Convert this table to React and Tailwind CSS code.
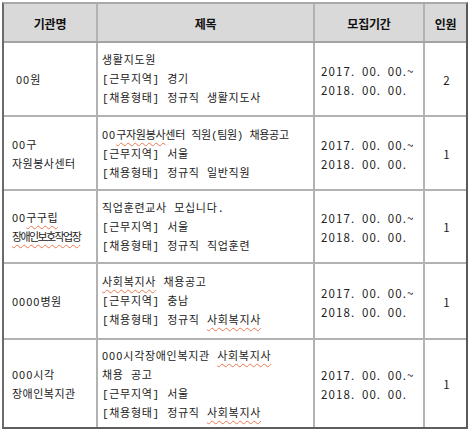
const font = { fontFamily: '"Liberation Mono", "Noto Sans CJK KR", monospace' };
const cjk = { fontFamily: '"Noto Sans CJK KR", sans-serif' };

const Sq = ({ children }) => (
  <span className="underline decoration-wavy decoration-[#ea7a52] decoration-1 underline-offset-[3px]">
    {children}
  </span>
);

// digits look thin in the reference, so they use the CJK face
const N = ({ children }) => (
  <span className="tracking-[1px]" style={cjk}>
    {children}
  </span>
);

const rows = [
  {
    h: 'h-[74px]',
    org: [
      <span className="pl-1">
        <N>00</N>원
      </span>,
    ],
    title: ['생활지도원', '[근무지역] 경기', '[채용형태] 정규직 생활지도사'],
    count: '2',
  },
  {
    h: 'h-[74px]',
    org: [
      <span>
        <N>00</N>구
      </span>,
      '자원봉사센터',
    ],
    title: [
      <span className="tracking-[-0.3px]">
        <N>00</N>
        <Sq>구자원봉사</Sq>센터 직원(팀원) 채용공고
      </span>,
      '[근무지역] 서울',
      '[채용형태] 정규직 일반직원',
    ],
    count: '1',
  },
  {
    h: 'h-[73px]',
    org: [
      <span>
        <N>00</N>
        <Sq>구구립</Sq>
      </span>,
      <span className="tracking-[-1.6px]">
        <Sq>장애인보호작업장</Sq>
      </span>,
    ],
    title: ['직업훈련교사 모십니다.', '[근무지역] 서울', '[채용형태] 정규직 직업훈련'],
    count: '1',
  },
  {
    h: 'h-[76px]',
    org: [
      <span>
        <N>0000</N>병원
      </span>,
    ],
    title: [
      <span>
        <Sq>사회복지사</Sq> 채용공고
      </span>,
      '[근무지역] 충남',
      <span>
        [채용형태] 정규직 <Sq>사회복지사</Sq>
      </span>,
    ],
    count: '1',
  },
  {
    h: 'h-[87px]',
    org: [
      <span>
        <N>000</N>시각
      </span>,
      '장애인복지관',
    ],
    title: [
      <span>
        <N>000</N>시각장애인복지관 <Sq>사회복지사</Sq>
      </span>,
      '채용 공고',
      '[근무지역] 서울',
      <span>
        [채용형태] 정규직 <Sq>사회복지사</Sq>
      </span>,
    ],
    count: '1',
  },
];

const cols = 'grid grid-cols-[94px_217px_110px_41px]';
const line = 'border-r-2 border-[#b2b2b2]';

export default function App() {
  return (
    <div className="w-[472px] h-[436px] bg-white pt-[2px] pl-[2px]" style={font}>
      <div className="w-[466px] border-2 border-t-[#a9a9a9] border-l-[#6a6a6a] border-r-[#595959] border-b-[#5e5e5e] text-[11px] text-[#222]">
        {/* header */}
        <div
          className={`${cols} h-[39px] bg-[#d9d9d9] border-b-2 border-[#a3a3a3] font-bold text-[12px] text-[#111] tracking-[-0.2px]`}
          style={cjk}
        >
          <div className={`${line} border-[#a3a3a3] flex items-center justify-center pt-[3px]`}>기관명</div>
          <div className={`${line} border-[#a3a3a3] flex items-center justify-center pt-[3px]`}>제목</div>
          <div className={`${line} border-[#a3a3a3] flex items-center justify-center pt-[3px]`}>모집기간</div>
          <div className="flex items-center justify-center pt-[3px]">인원</div>
        </div>

        {rows.map((r, i) => (
          <div
            key={i}
            className={`${cols} ${r.h} ${i < rows.length - 1 ? 'border-b-2 border-[#b2b2b2]' : ''}`}
          >
            <div className={`${line} flex flex-col justify-center pl-2 pt-[3px] leading-[19px] tracking-[0.5px] whitespace-nowrap`}>
              {r.org.map((t, j) => (
                <div key={j}>{t}</div>
              ))}
            </div>
            <div className={`${line} flex flex-col justify-center pl-[4px] pt-[3px] leading-[19px] tracking-[0.7px] whitespace-nowrap`}>
              {r.title.map((t, j) => (
                <div key={j}>{t}</div>
              ))}
            </div>
            <div
              className={`${line} flex flex-col justify-center pl-[6px] pt-[3px] leading-[19px] tracking-[1.1px] [word-spacing:3px] text-[11.5px] whitespace-nowrap`}
              style={cjk}
            >
              <div>2017. 00. 00.~</div>
              <div>2018. 00. 00.</div>
            </div>
            <div className="flex items-center justify-center pl-[2px] pt-[3px] text-[11.5px]" style={cjk}>
              {r.count}
            </div>
          </div>
        ))}
      </div>
    </div>
  );
}
